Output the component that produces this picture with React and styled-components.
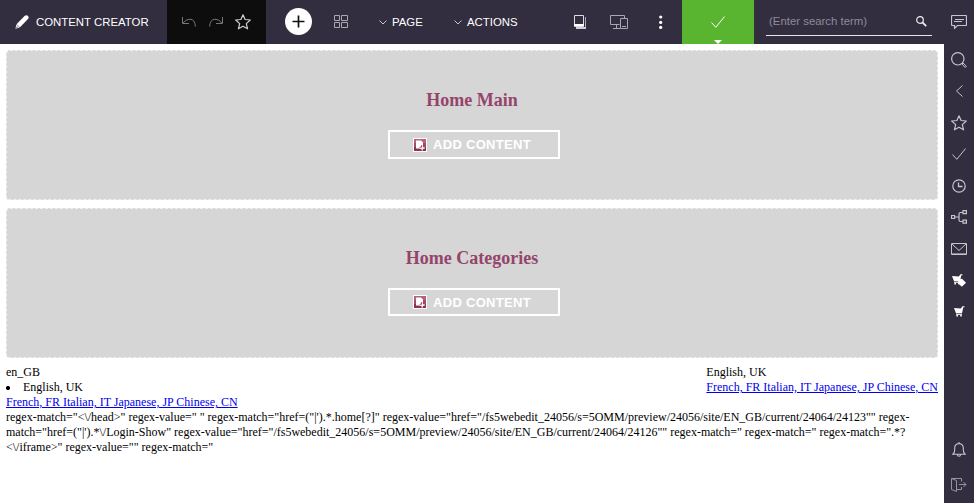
import React from "react";
import styled, { createGlobalStyle } from "styled-components";

const GlobalStyle = createGlobalStyle`
  * { box-sizing: border-box; }
  body {
    margin: 0;
    background: #fff;
    color: #000;
    font: 12px/15px "Liberation Serif", "Times New Roman", serif;
  }
`;

const Shell = styled.div`
  display: grid;
  grid-template: 44px 459px / 944px 30px;
  width: 974px;
  height: 503px;
  overflow: hidden;
`;

const Header = styled.header`
  grid-column: 1 / 3;
  display: flex;
  background: #322e40;
  color: #fff;
  font: 11.4px/14px "Liberation Sans", Arial, sans-serif;
`;

const Segment = styled.div`
  display: flex;
  align-items: center;
  flex: none;
  width: ${(p) => p.$width}px;
  padding-left: ${(p) => p.$pad || 0}px;
  gap: ${(p) => p.$gap || 0}px;
  background: ${(p) => p.$bg || "transparent"};
`;

const Slot = styled.div`
  display: flex;
  align-items: center;
  flex: none;
  width: ${(p) => p.$width}px;
`;

const AddButton = styled.button`
  display: flex;
  align-items: center;
  justify-content: center;
  width: 27px;
  height: 27px;
  padding: 0;
  margin-top: -1px;
  border: 0;
  border-radius: 50%;
  background: #fff;
`;

const MenuButton = styled.button`
  display: flex;
  align-items: center;
  flex: none;
  gap: 5px;
  width: ${(p) => p.$width}px;
  padding: 0;
  border: 0;
  background: none;
  color: inherit;
  font: inherit;
`;

const Release = styled.div`
  display: flex;
  flex-direction: column;
  align-items: center;
  justify-content: flex-end;
  gap: 12px;
  width: 72px;
  background: #59b52f;
`;

const SearchArea = styled.div`
  width: 190px;
  padding: 7px 12px 0;
`;

const SearchField = styled.label`
  display: flex;
  align-items: center;
  height: 29px;
  padding: 0 5px 0 3px;
  border-bottom: 1px solid #e5e4e8;
`;

const SearchInput = styled.input`
  width: 147px;
  padding: 0;
  border: 0;
  outline: 0;
  background: none;
  color: #fff;
  font: 11.4px/14px "Liberation Sans", Arial, sans-serif;
  &::placeholder { color: #8e8b98; opacity: 1; }
`;

const Page = styled.main`
  padding: 6px;
`;

const DropZone = styled.section`
  display: flex;
  flex-direction: column;
  align-items: center;
  height: 150px;
  margin-bottom: ${(p) => p.$after}px;
  padding-top: 39px;
  border: 1px dashed #f1f1f1;
  border-radius: 4px;
  background: #d6d6d6;
`;

const ZoneTitle = styled.h2`
  margin: 0 0 19px;
  color: #95446b;
  font-size: 18px;
  line-height: 21px;
`;

const AddContent = styled.button`
  display: flex;
  align-items: center;
  gap: 6px;
  width: 172px;
  height: ${(p) => p.$height}px;
  margin-left: 4px;
  padding: 0 0 0 23px;
  border: 2px solid #fff;
  background: none;
  color: #fff;
  font: bold 13px/15px "Liberation Sans", Arial, sans-serif;
  letter-spacing: 0.3px;
  white-space: nowrap;
`;

const LocaleRow = styled.div`
  display: flex;
  justify-content: space-between;
`;

const Current = styled.li`
  padding-left: 17px;
  list-style: none;
  background: radial-gradient(circle at 2px 8px, #000 1.6px, transparent 2.4px);
`;

const Languages = styled.a`
  display: block;
  width: max-content;
  color: #0000ee;
  text-decoration: underline;
`;

const Sidebar = styled.aside`
  display: flex;
  flex-direction: column;
  align-items: center;
  background: #322e40;
`;

const SideItem = styled.div`
  display: flex;
  align-items: center;
  justify-content: center;
  flex: none;
  width: 30px;
  height: ${(p) => p.$height || 31.5}px;
  margin-top: ${(p) => p.$before || 0}px;
`;

const Svg = styled.svg`
  display: block;
  flex: none;
  fill: none;
  stroke: ${(p) => p.$color || "#c6c4cc"};
  stroke-width: 1;
`;

const Icon = ({ w, h, color, children }) => (
  <Svg width={w} height={h} viewBox={`0 0 ${w} ${h}`} $color={color} aria-hidden="true">
    {children}
  </Svg>
);

const PencilIcon = () => (
  <Icon w={14} h={14} color="none">
    <path fill="#fff" d="M9.800.8Q11.400-.4 12.800.8T13.200 3.800L5 12.300 1.500 9.200z" />
    <path fill="#fff" d="M1.300 9.500l3.400 3-4.200 1.300z" />
    <path fill="#322e40" d="M1.600 11.200l1.400 1.200-1.500.5z" />
  </Icon>
);
const UndoIcon = () => (
  <Icon w={14} h={12} color="#777">
    <path d="M.5 1v6.500H7M1 7Q4 3.200 8 3.200 13 3.500 13.400 10.500" />
  </Icon>
);
const RedoIcon = () => (
  <Icon w={14} h={12} color="#777">
    <path d="M13.500 1v6.500H7M13 7Q10 3.200 6 3.200 1 3.500.6 10.500" />
  </Icon>
);
const StarIcon = ({ color }) => (
  <Icon w={16} h={16} color={color}>
    <path strokeLinejoin="round" strokeWidth="1.200" d="M8 .8l2.100 4.700 5.200.5-4 3.600 1.300 5.200L8 12.200l-4.600 2.600 1.300-5.200-4-3.600 5.200-.5z" />
  </Icon>
);
const PlusIcon = () => (
  <Icon w={13} h={13} color="#111">
    <path strokeWidth="1.700" d="M6.500.5v12M.5 6.500h12" />
  </Icon>
);
const TilesIcon = () => (
  <Icon w={14} h={14} color="#aaa7b3">
    <path d="M.5.500h5v5h-5zM7.500.500h6v5h-6zM.5 7.500h5v5h-5zM7.500 7.500h6v5h-6z" />
  </Icon>
);
const DownIcon = () => (
  <Icon w={8} h={5}>
    <path d="M.5.500L4 4 7.500.5" />
  </Icon>
);
const PagesIcon = () => (
  <Icon w={13} h={14} color="#dddce1">
    <path d="M.5.500h9v11h-9z" />
    <path fill="#fff" stroke="none" d="M0 9h10v2H0z" />
    <path fill="#cfced5" stroke="none" d="M2 12h10v2H2z" />
    <path stroke="#aaa7b3" d="M11.500 2v10" />
  </Icon>
);
const DevicesIcon = () => (
  <Icon w={18} h={15} color="#aaa7b3">
    <path d="M14.500 3V.5h-14v9h9M6.500 9.500v4M3 13.500h7M10.500 3.500h7v10h-7zM12 11.500h4" />
  </Icon>
);
const DotsIcon = () => (
  <Icon w={4} h={14} color="none">
    <g fill="#fff">
      <circle cx="1.700" cy="2" r="1.600" />
      <circle cx="1.700" cy="7.400" r="1.600" />
      <circle cx="1.700" cy="12.400" r="1.600" />
    </g>
  </Icon>
);
const CheckIcon = ({ color }) => (
  <Icon w={14} h={12} color={color}>
    <path d="M.5 6.500l4.300 4.800L13.600.5" />
  </Icon>
);
const NotchIcon = () => (
  <Icon w={8} h={4} color="none">
    <path fill="#fff" d="M0 0h8L4 4z" />
  </Icon>
);
const FindIcon = () => (
  <Icon w={11} h={11} color="#eee">
    <circle cx="4" cy="4" r="3.300" strokeWidth="1.200" />
    <path strokeWidth="1.800" d="M6.700 6.700l3.500 3.500" />
  </Icon>
);
const CommentIcon = () => (
  <Icon w={16} h={14}>
    <path strokeWidth="1.200" d="M1.500.500h13q1 0 1 1v8q0 1-1 1H6.500L3.500 13.300V10.500h-2q-1 0-1-1v-8q0-1 1-1zM4 4.500h9M3 6.500h8" />
  </Icon>
);
const LensIcon = () => (
  <Icon w={16} h={16}>
    <circle cx="6.800" cy="6.800" r="6.200" strokeWidth="1.200" />
    <path d="M11 12l1-1 3.400 3.200-1.300 1.300z" />
  </Icon>
);
const BackIcon = () => (
  <Icon w={8} h={12}>
    <path d="M7.500.500L1.500 6l6 5.500" />
  </Icon>
);
const ClockIcon = () => (
  <Icon w={14} h={14}>
    <circle cx="7" cy="7" r="6.200" strokeWidth="1.200" />
    <path d="M6.500 3.500v4h4" strokeWidth="1.300" />
  </Icon>
);
const ShareIcon = () => (
  <Icon w={16} h={14}>
    <path strokeWidth="1.200" d="M.6 5.500h3v3h-3zM12 .6h3.400v3H12zM12 10.200h3.400v3H12zM3.500 7h4.500M12 2.500H9.500Q8 2.500 8 4v6q0 1.500 1.500 1.500H12" />
  </Icon>
);
const MailIcon = () => (
  <Icon w={16} h={12}>
    <path d="M.5.500h15v11H.5zM1 1l7 6.500L15 1" />
    <path d="M1 10.500h14" stroke="#8a8793" />
  </Icon>
);
const CartShape = () => (
  <>
    <path d="M0 2l6.800.4L8.500.3h2v.9H9.300L8 7.200H2z" />
    <path d="M2 7.800h6v1H2z" />
    <circle cx="3.200" cy="9.700" r=".9" />
    <circle cx="7" cy="9.700" r=".9" />
  </>
);
const CartTagIcon = () => (
  <Icon w={14} h={13} color="none">
    <g fill="#fff">
      <CartShape />
      <path d="M6.500 5.500L10 4.800l4 4-4.200 4L6 9z" />
    </g>
  </Icon>
);
const CartIcon = () => (
  <Icon w={11} h={11} color="none">
    <g fill="#fff"><CartShape /></g>
  </Icon>
);
const BellIcon = () => (
  <Icon w={14} h={15}>
    <path strokeWidth="1.100" d="M.8 12.300Q2.700 11 2.700 8V6Q2.700 2 7 1.500 11.300 2 11.300 6v2q0 3 1.900 4.300zM7 0v1.500M5.500 12.500q0 1.800 1.500 1.800t1.500-1.800" />
  </Icon>
);
const ExitIcon = () => (
  <Icon w={16} h={14} color="#96939f">
    <path d="M5 .5h5.500v3M5 11.500h5.500V9M.5.500L5.500 2.500v11L.5 11.500zM.5.500H6M8 6.500h7M12.500 4L15 6.500 12.500 9" />
  </Icon>
);
const NewContentIcon = () => (
  <Icon w={14} h={14} color="none">
    <path fill="#fff" d="M0 0h14v14H0z" />
    <path fill="#b9607e" d="M1 1h12v4H1z" />
    <path fill="#a34a6b" d="M1 5h12v4H1z" />
    <path fill="#8e3155" d="M1 9h12v4H1z" />
    <path fill="#fff" d="M3 2.500h5l2 2v3H8v3H3z" />
    <path stroke="#fff" strokeWidth="1.300" d="M9.200 7.500v5M6.700 10h5" />
    <path stroke="#8e3155" strokeWidth=".8" d="M6.500 9.300h1.900V7.300" />
  </Icon>
);

const zones = [
  { title: "Home Main", after: 8, buttonHeight: 29 },
  { title: "Home Categories", after: 7, buttonHeight: 28 },
];
const sideIcons = [LensIcon, BackIcon, StarIcon, CheckIcon, ClockIcon, ShareIcon, MailIcon, CartTagIcon, CartIcon];
const LANGUAGES = "French, FR Italian, IT Japanese, JP Chinese, CN";

export default function App() {
  return (
    <Shell>
      <GlobalStyle />
      <Header>
        <Segment $width={167} $pad={15} $gap={7}>
          <PencilIcon />
          CONTENT CREATOR
        </Segment>
        <Segment $width={99} $pad={15} $bg="#0d0d0d">
          <Slot $width={27}><UndoIcon /></Slot>
          <Slot $width={26}><RedoIcon /></Slot>
          <StarIcon color="#d0d0d0" />
        </Segment>
        <Segment $width={416} $pad={19}>
          <Slot $width={49}><AddButton aria-label="Add"><PlusIcon /></AddButton></Slot>
          <Slot $width={45}><TilesIcon /></Slot>
          <MenuButton $width={75}><DownIcon />PAGE</MenuButton>
          <MenuButton $width={120}><DownIcon />ACTIONS</MenuButton>
          <Slot $width={36}><PagesIcon /></Slot>
          <Slot $width={49}><DevicesIcon /></Slot>
          <DotsIcon />
        </Segment>
        <Release>
          <CheckIcon color="#fff" />
          <NotchIcon />
        </Release>
        <SearchArea>
          <SearchField>
            <SearchInput placeholder="(Enter search term)" />
            <FindIcon />
          </SearchField>
        </SearchArea>
        <Segment $width={30} $pad={7}><CommentIcon /></Segment>
      </Header>
      <Page>
        {zones.map((z) => (
          <DropZone key={z.title} $after={z.after}>
            <ZoneTitle>{z.title}</ZoneTitle>
            <AddContent $height={z.buttonHeight}>
              <NewContentIcon />
              ADD CONTENT
            </AddContent>
          </DropZone>
        ))}
        <LocaleRow>
          <div>
            <div>en_GB</div>
            <Current>English, UK</Current>
            <Languages>{LANGUAGES}</Languages>
          </div>
          <div>
            <div>English, UK</div>
            <Languages>{LANGUAGES}</Languages>
          </div>
        </LocaleRow>
        <div>
          {'regex-match="<\\/head>" regex-value=" " regex-match="href=("|\').*.home[?]" regex-value="href="/fs5webedit_24056/s=5OMM/preview/24056/site/EN_GB/current/24064/24123"" regex-'}
          <br />
          {'match="href=("|\').*\\/Login-Show" regex-value="href="/fs5webedit_24056/s=5OMM/preview/24056/site/EN_GB/current/24064/24126"" regex-match=" regex-match=" regex-match=".*?'}
          <br />
          {'<\\/iframe>" regex-value="" regex-match="'}
        </div>
      </Page>
      <Sidebar>
        {sideIcons.map((Glyph, i) => (
          <SideItem key={i}><Glyph /></SideItem>
        ))}
        <SideItem $before={106} $height={32}><BellIcon /></SideItem>
        <SideItem $height={38}><ExitIcon /></SideItem>
      </Sidebar>
    </Shell>
  );
}
